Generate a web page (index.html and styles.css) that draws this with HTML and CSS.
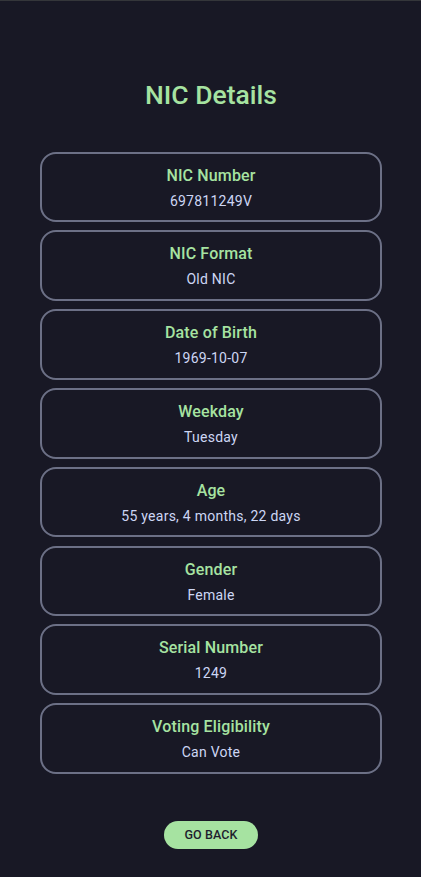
FILE: index.html
```html
<!DOCTYPE html>
<html lang="en">
<head>
<meta charset="utf-8">
<title>NIC Details</title>
<link rel="stylesheet" href="styles.css">
</head>
<body>
<main class="page">
  <h1 class="title">NIC Details</h1>
  <section class="list">
    <div class="card"><div class="label">NIC Number</div><div class="value">697811249V</div></div>
    <div class="card"><div class="label">NIC Format</div><div class="value">Old NIC</div></div>
    <div class="card"><div class="label">Date of Birth</div><div class="value">1969-10-07</div></div>
    <div class="card"><div class="label">Weekday</div><div class="value">Tuesday</div></div>
    <div class="card"><div class="label">Age</div><div class="value">55 years, 4 months, 22 days</div></div>
    <div class="card"><div class="label">Gender</div><div class="value">Female</div></div>
    <div class="card"><div class="label">Serial Number</div><div class="value">1249</div></div>
    <div class="card"><div class="label">Voting Eligibility</div><div class="value">Can Vote</div></div>
  </section>
  <div class="actions"><button class="back">GO BACK</button></div>
</main>
</body>
</html>
```
FILE: styles.css
```css
html, body {
  margin: 0;
  padding: 0;
  background: #181825;
}
body {
  border-top: 1px solid #34363a;
  min-height: 876px;
  font-family: Roboto, "Liberation Sans", sans-serif;
}
.page {
  display: flex;
  flex-direction: column;
  padding: 0 39px 0 40px;
}
.title {
  margin: 76px 0 0;
  height: 36px;
  line-height: 36px;
  text-align: center;
  font-size: 26.5px;
  font-weight: 500;
  color: #a6e3a1;
}
.list {
  display: flex;
  flex-direction: column;
  gap: 8.3px;
  margin-top: 38.7px;
}
.card {
  box-sizing: border-box;
  height: 70.5px;
  border: 2px solid #6c7086;
  border-radius: 16px;
  display: flex;
  flex-direction: column;
  align-items: center;
  padding-top: 10px;
}
.label {
  font-size: 16px;
  font-weight: 500;
  line-height: 24px;
  letter-spacing: 0.15px;
  color: #a6e3a1;
}
.value {
  margin-top: 3px;
  font-size: 14px;
  line-height: 20px;
  letter-spacing: 0.25px;
  color: #cdd6f4;
}
.actions {
  display: flex;
  justify-content: center;
  margin-top: 47px;
}
.back {
  width: 94px;
  height: 28px;
  padding: 0;
  border: none;
  border-radius: 14px;
  background: #a6e3a1;
  color: #1e1e2e;
  font-family: Roboto, "Liberation Sans", sans-serif;
  font-size: 12.5px;
  font-weight: 500;
  letter-spacing: 0.1px;
}
```
